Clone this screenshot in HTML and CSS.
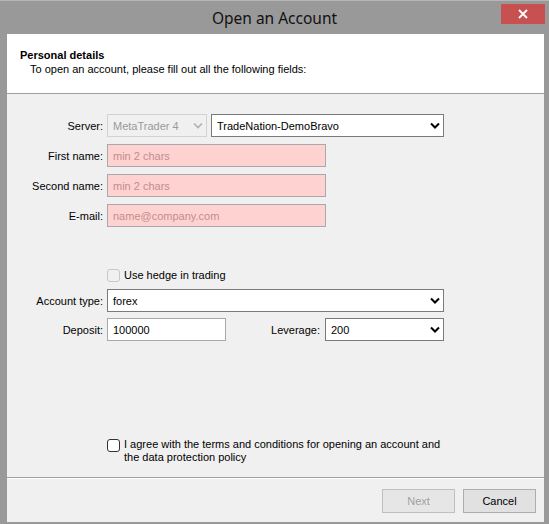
FILE: index.html
```html
<!DOCTYPE html>
<html lang="en">
<head>
  <meta charset="UTF-8">
  <title>Open an Account</title>
  <link rel="stylesheet" href="styles.css">
</head>
<body>
  <div class="window">
    <div class="titlebar">
      <span></span>
      <div class="title">Open an Account</div>
      <div class="close-wrap">
        <div class="close">
          <svg width="10" height="10" viewBox="0 0 10 10"><path d="M1 1L9 9M9 1L1 9" stroke="#fff" stroke-width="1.8"/></svg>
        </div>
      </div>
    </div>

    <div class="client">
      <div class="header">
        <div class="header-title">Personal details</div>
        <div class="header-sub">To open an account, please fill out all the following fields:</div>
      </div>

      <div class="form">
        <div class="row">
          <label class="label">Server:</label>
          <div class="select disabled narrow">
            <span>MetaTrader 4</span>
            <svg width="10" height="7" viewBox="0 0 10 7"><path d="M1 1.5L5 5.5L9 1.5" fill="none" stroke="#b0b0b0" stroke-width="1.6"/></svg>
          </div>
          <div class="select server">
            <span>TradeNation-DemoBravo</span>
            <svg width="10" height="7" viewBox="0 0 10 7"><path d="M1 1.5L5 5.5L9 1.5" fill="none" stroke="#000" stroke-width="2"/></svg>
          </div>
        </div>
        <div class="row">
          <label class="label">First name:</label>
          <input class="input invalid" type="text" placeholder="min 2 chars">
        </div>
        <div class="row">
          <label class="label">Second name:</label>
          <input class="input invalid" type="text" placeholder="min 2 chars">
        </div>
        <div class="row">
          <label class="label">E-mail:</label>
          <input class="input invalid" type="text" placeholder="name@company.com">
        </div>

        <div class="row check-row">
          <span class="label"></span>
          <span class="checkbox off"></span>
          <span class="check-text">Use hedge in trading</span>
        </div>

        <div class="row type-row">
          <label class="label">Account type:</label>
          <div class="select wide">
            <span>forex</span>
            <svg width="10" height="7" viewBox="0 0 10 7"><path d="M1 1.5L5 5.5L9 1.5" fill="none" stroke="#000" stroke-width="2"/></svg>
          </div>
        </div>
        <div class="row">
          <label class="label">Deposit:</label>
          <input class="input deposit" type="text" value="100000">
          <label class="label lev-label">Leverage:</label>
          <div class="select leverage">
            <span>200</span>
            <svg width="10" height="7" viewBox="0 0 10 7"><path d="M1 1.5L5 5.5L9 1.5" fill="none" stroke="#000" stroke-width="2"/></svg>
          </div>
        </div>

        <div class="agree">
          <span class="checkbox"></span>
          <span class="agree-text">I agree with the terms and conditions for opening an account and<br>the data protection policy</span>
        </div>
      </div>

      <div class="footer">
        <button class="btn" disabled>Next</button>
        <button class="btn">Cancel</button>
      </div>
    </div>
  </div>
</body>
</html>
```

FILE: styles.css
```css
body {
  margin: 0;
  font-family: 'Liberation Sans', Arial, sans-serif;
  font-size: 11px;
  color: #000;
}

.window {
  width: 549px;
  height: 524px;
  box-sizing: border-box;
  background: #999999;
  border-top: 1px solid #b5b5b5;
  padding: 0 5px 2px 7px;
  display: flex;
  flex-direction: column;
}

.titlebar {
  height: 33px;
  display: grid;
  grid-template-columns: 1fr auto 1fr;
  margin-left: -7px;
  margin-right: -5px;
}

.title {
  font-family: 'Noto Sans', sans-serif;
  font-size: 15.5px;
  color: #111;
  padding-top: 6px;
}

.close-wrap {
  display: flex;
  justify-content: flex-end;
  align-items: flex-start;
  padding: 3px 4px 0 0;
}

.close {
  width: 44px;
  height: 20px;
  background: #c75050;
  display: flex;
  justify-content: center;
  align-items: center;
}

.client {
  flex: 1;
  background: #f0f0f0;
  display: flex;
  flex-direction: column;
}

.header {
  height: 60px;
  background: #ffffff;
  border-bottom: 1px solid #a0a0a0;
  padding: 14px 0 0 13px;
  box-sizing: border-box;
}

.header-title {
  font-weight: bold;
  line-height: 14px;
}

.header-sub {
  padding-left: 10px;
  line-height: 15px;
}

.form {
  flex: 1;
  padding-top: 20px;
}

.row {
  display: flex;
  align-items: center;
  height: 23px;
  margin-bottom: 7px;
}

.label {
  width: 96px;
  text-align: right;
  margin-right: 4px;
  flex-shrink: 0;
}

.select {
  height: 23px;
  box-sizing: border-box;
  border: 1px solid #7a7a7a;
  background: #fff;
  display: flex;
  align-items: center;
  justify-content: space-between;
  padding: 0 3px 0 5px;
}

.select.disabled {
  border-color: #d2d2d2;
  background: #f0f0f0;
  color: #9a9a9a;
}

.narrow {
  width: 100px;
  margin-right: 4px;
}

.server {
  width: 233px;
}

.wide {
  width: 337px;
}

.leverage {
  width: 119px;
}

.input {
  height: 23px;
  box-sizing: border-box;
  border: 1px solid #a9a9a9;
  font-family: inherit;
  font-size: 11px;
  padding: 0 5px;
  margin: 0;
  outline: none;
}

.input.invalid {
  width: 219px;
  background: #ffd2d2;
}

.input.invalid::placeholder {
  color: #c48c8c;
}

.input.deposit {
  width: 119px;
  background: #fff;
}

.lev-label {
  width: 94px;
  margin-right: 5px;
}

.check-row {
  margin-top: 38px;
  height: 20px;
  margin-bottom: 4px;
}

.checkbox {
  width: 13px;
  height: 13px;
  box-sizing: border-box;
  border: 1px solid #333;
  border-radius: 3px;
  background: #fff;
  flex-shrink: 0;
  margin-right: 4px;
}

.checkbox.off {
  border-color: #c8c8c8;
  background: #f0f0f0;
}

.type-row {
  margin-bottom: 6px;
}

.agree {
  display: flex;
  align-items: flex-start;
  margin: 97px 0 0 100px;
}

.agree .checkbox {
  margin-top: 1px;
}

.agree-text {
  line-height: 13px;
}

.footer {
  height: 45px;
  border-top: 1px solid #a0a0a0;
  box-shadow: inset 0 1px 0 #fff;
  display: flex;
  justify-content: flex-end;
  align-items: flex-start;
  padding: 11px 8px 0 0;
  box-sizing: border-box;
  gap: 8px;
}

.btn {
  width: 73px;
  height: 24px;
  font-family: inherit;
  font-size: 11px;
  background: #e1e1e1;
  border: 1px solid #adadad;
  color: #000;
  padding: 0;
}

.btn:disabled {
  background: #e6e6e6;
  border-color: #bfbfbf;
  color: #a0a0a0;
}
```
